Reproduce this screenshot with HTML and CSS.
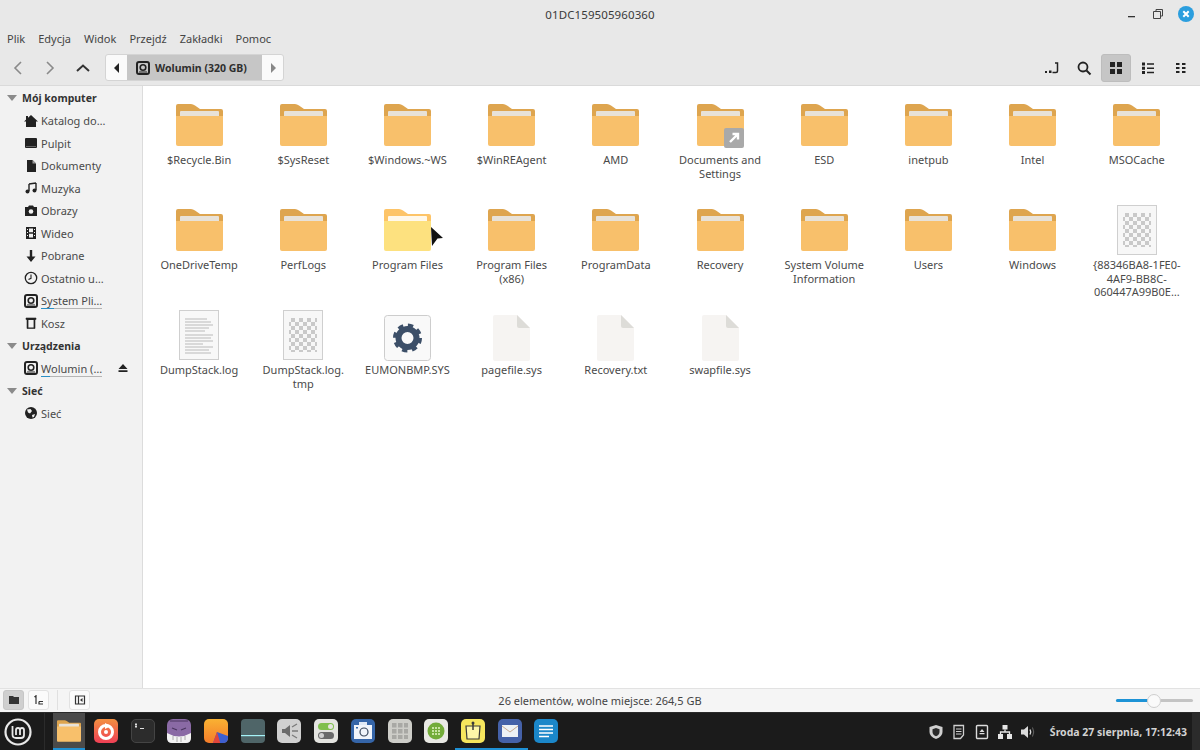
FILE: index.html
```html
<!DOCTYPE html>
<html lang="pl">
<head>
<meta charset="utf-8">
<title>01DC159505960360</title>
<link rel="stylesheet" href="styles.css">
</head>
<body>
<svg class="defs" width="0" height="0">
  <defs>
    <symbol id="folder" viewBox="0 0 47 42">
      <path d="M2 0H15q2 0 4 1.500L24 5H45q2 0 2 2V20H0V2q0-2 2-2z" fill="#dea54f"/>
      <rect x="4" y="7" width="39" height="6" rx="1" fill="#e8e2d8"/>
      <path d="M0 12H3V12H44V12H47V40q0 2-2 2H2q-2 0-2-2z" fill="#f8c06b"/>
    </symbol>
    <symbol id="folder-hover" viewBox="0 0 47 42">
      <path d="M2 0H15q2 0 4 1.500L24 5H45q2 0 2 2V20H0V2q0-2 2-2z" fill="#fdc468"/>
      <rect x="4" y="7" width="39" height="6" rx="1" fill="#fff8ea"/>
      <path d="M0 12H47V40q0 2-2 2H2q-2 0-2-2z" fill="#fde17f"/>
    </symbol>
    <pattern id="check" width="8" height="8" patternUnits="userSpaceOnUse">
      <rect width="4" height="4" fill="#c9c9c9"/>
      <rect x="4" y="4" width="4" height="4" fill="#c9c9c9"/>
    </pattern>
    <symbol id="thumb-check" viewBox="0 0 40 50">
      <rect x=".5" y=".5" width="39" height="49" fill="#f7f7f7" stroke="#cfcfcf"/>
      <rect x="6" y="8" width="28" height="34" fill="url(#check)"/>
    </symbol>
    <symbol id="thumb-text" viewBox="0 0 40 50">
      <rect x=".5" y=".5" width="39" height="49" fill="#f8f8f8" stroke="#cfcfcf"/>
      <path d="M6 9h22M6 12h26M6 15h28M6 18h24M6 21h20M6 25h28M6 28h26M6 31h28M6 34h18M6 37h28M6 40h24M6 43h26" stroke="#a9a9a9" stroke-width=".8"/>
    </symbol>
    <symbol id="file" viewBox="0 0 37 46">
      <path d="M2 0H24L37 13V44q0 2-2 2H2q-2 0-2-2V2q0-2 2-2z" fill="#f6f4f2"/>
      <path d="M24 0L37 13H26q-2 0-2-2z" fill="#dddcd8"/>
    </symbol>
    <symbol id="gear-file" viewBox="0 0 47 46">
      <rect x=".5" y=".5" width="46" height="45" rx="3" fill="#f9f9f9" stroke="#cdcdcd"/>
      <circle cx="23.500" cy="23" r="9" fill="none" stroke="#3c4f68" stroke-width="6"/>
      <circle cx="23.500" cy="23" r="12.500" fill="none" stroke="#3c4f68" stroke-width="4" stroke-dasharray="5.200 4.620"/>
    </symbol>
    <symbol id="disk" viewBox="0 0 14 14">
      <rect x="1" y="1" width="12" height="12" rx="2" fill="none" stroke="#222" stroke-width="2"/>
      <circle cx="7" cy="6.500" r="2.800" fill="none" stroke="#222" stroke-width="1.600"/>
      <rect x="3" y="10.500" width="8" height="1" fill="#222"/>
    </symbol>
  </defs>
</svg>

<div class="window">
  <header class="titlebar">
    <span class="title">01DC159505960360</span>
    <div class="wm">
      <svg class="wm-ico" viewBox="0 0 12 12"><rect x="1" y="8" width="7" height="1.300" fill="#333"/></svg>
      <svg class="wm-ico" viewBox="0 0 12 12"><path d="M4 3V1.500H10.500V8H9M1.500 3.500H8.500V10.500H1.500z" fill="none" stroke="#444" stroke-width="1"/></svg>
      <svg class="wm-close" viewBox="0 0 16 16"><circle cx="8" cy="8" r="8" fill="#2b9ede"/><path d="M5.300 5.300L10.700 10.700M10.700 5.300L5.300 10.700" stroke="#fff" stroke-width="2"/></svg>
    </div>
  </header>

  <nav class="menubar">
    <span class="menu">Plik</span><span class="menu">Edycja</span><span class="menu">Widok</span><span class="menu">Przejdź</span><span class="menu">Zakładki</span><span class="menu">Pomoc</span>
  </nav>

  <div class="toolbar">
    <div class="navs">
      <svg class="nav" viewBox="0 0 16 16"><path d="M11 2L5 8L11 14" fill="none" stroke="#8a8a8a" stroke-width="1.600"/></svg>
      <svg class="nav" viewBox="0 0 16 16"><path d="M5 2L11 8L5 14" fill="none" stroke="#8a8a8a" stroke-width="1.600"/></svg>
      <svg class="nav" viewBox="0 0 16 16"><path d="M2 11L8 5.500L14 11" fill="none" stroke="#333" stroke-width="2"/></svg>
    </div>
    <div class="path">
      <span class="path-btn"><svg class="arrow" viewBox="0 0 8 10"><path d="M6 0V10L1 5z" fill="#222"/></svg></span>
      <span class="crumb"><svg class="ico14" viewBox="0 0 14 14"><use href="#disk"/></svg>Wolumin (320 GB)</span>
      <span class="path-btn"><svg class="arrow" viewBox="0 0 8 10"><path d="M2 0V10L7 5z" fill="#888"/></svg></span>
    </div>
    <div class="views">
      <span class="view"><svg class="ico16" viewBox="0 0 16 16"><path d="M12 3H14.500V11Q14.500 12.500 13 12.500H9.500" fill="none" stroke="#222" stroke-width="1.500"/><rect x="6" y="10.500" width="2.500" height="2.500" fill="#222"/><rect x="2" y="11" width="2" height="2" fill="#222"/></svg></span>
      <span class="view"><svg class="ico16" viewBox="0 0 16 16"><circle cx="7" cy="7" r="4.500" fill="none" stroke="#222" stroke-width="1.800"/><path d="M10.500 10.500L14.500 14.500" stroke="#222" stroke-width="2"/></svg></span>
      <span class="view on"><svg class="ico16" viewBox="0 0 16 16"><path d="M2 2h5v5H2zM9 2h5v5H9zM2 9h5v5H2zM9 9h5v5H9z" fill="#222"/></svg></span>
      <span class="view"><svg class="ico16" viewBox="0 0 16 16"><path d="M2 2.500h3v3H2zM2 6.800h3v3H2zM2 11h3v3H2z" fill="#222"/><path d="M7 4h7M7 8.200h7M7 12.500h7" stroke="#222" stroke-width="1.400"/></svg></span>
      <span class="view"><svg class="ico16" viewBox="0 0 16 16"><path d="M3 3h3.500v2H3zM9 3h3.500v2H9zM3 7h3.500v2H3zM9 7h3.500v2H9zM3 11h3.500v2H3zM9 11h3.500v2H9z" fill="#222"/></svg></span>
    </div>
  </div>

  <div class="body">
    <aside class="sidebar">
      <div class="head"><i class="tri"></i>Mój komputer</div>
      <div class="row"><svg class="si" viewBox="0 0 14 14"><path d="M7 1L14 7.500H12V13H2V7.500H0zM2 2H4V4L2 6z" fill="#222"/></svg><span>Katalog do…</span></div>
      <div class="row"><svg class="si" viewBox="0 0 14 14"><rect x="1" y="2" width="12" height="10" rx="1" fill="#222"/><rect x="2" y="10" width="10" height=".8" fill="#777"/></svg><span>Pulpit</span></div>
      <div class="row"><svg class="si" viewBox="0 0 14 14"><path d="M3 1H8.500L12 4.500V13H3z" fill="#222"/><path d="M8.500 1V4.500H12" fill="#999"/></svg><span>Dokumenty</span></div>
      <div class="row"><svg class="si" viewBox="0 0 14 14"><path d="M5 3V10M12 2V9M5 3L12 2" fill="none" stroke="#222" stroke-width="1.400"/><circle cx="3.500" cy="10.500" r="2" fill="#222"/><circle cx="10.500" cy="9.500" r="2" fill="#222"/></svg><span>Muzyka</span></div>
      <div class="row"><svg class="si" viewBox="0 0 14 14"><path d="M1 3H4L5 1.500H9L10 3H13V12H1z" fill="#222"/><circle cx="7" cy="7.500" r="2.300" fill="#f2f2f2"/></svg><span>Obrazy</span></div>
      <div class="row"><svg class="si" viewBox="0 0 14 14"><path d="M2 1H12V13H2z" fill="#222"/><path d="M5 2.500H9V6.300H5zM5 7.700H9V11.500H5z" fill="#f2f2f2"/><path d="M3 3h1v1H3zM3 6h1v1H3zM3 9h1v1H3zM10 3h1v1h-1zM10 6h1v1h-1zM10 9h1v1h-1z" fill="#f2f2f2"/></svg><span>Wideo</span></div>
      <div class="row"><svg class="si" viewBox="0 0 14 14"><path d="M5.800 1H8.200V7.500H11.500L7 13L2.500 7.500H5.800z" fill="#222"/></svg><span>Pobrane</span></div>
      <div class="row"><svg class="si" viewBox="0 0 14 14"><circle cx="7" cy="7" r="5.700" fill="none" stroke="#222" stroke-width="1.300"/><path d="M7 3.500V7.300L4.500 8.500" fill="none" stroke="#222" stroke-width="1.100"/></svg><span>Ostatnio u…</span></div>
      <div class="row"><svg class="si" viewBox="0 0 14 14"><use href="#disk"/></svg><span class="used">System Pli…<i class="bar"><b class="bar-fill" style="width:22%"></b></i></span></div>
      <div class="row"><svg class="si" viewBox="0 0 14 14"><path d="M2 2H12V3.500H2zM3 3.500V12.500H11V3.500" fill="#222" stroke="#222" stroke-width=".6"/><rect x="4.400" y="4" width="5.200" height="7.500" fill="#f2f2f2"/></svg><span>Kosz</span></div>
      <div class="head"><i class="tri"></i>Urządzenia</div>
      <div class="row"><svg class="si" viewBox="0 0 14 14"><use href="#disk"/></svg><span class="used">Wolumin (…<i class="bar"><b class="bar-fill" style="width:14%"></b></i></span><svg class="eject" viewBox="0 0 10 10"><path d="M5 1L9.500 6H.5zM.5 7.200H9.500V9H.5z" fill="#222"/></svg></div>
      <div class="head"><i class="tri"></i>Sieć</div>
      <div class="row"><svg class="si" viewBox="0 0 14 14"><circle cx="7" cy="7" r="6" fill="#222"/><path d="M3 3.500L6.500 3L8 5L6 7.500L4 6.500zM8 9L11 8L10 11L8.500 11.500z" fill="#f2f2f2"/></svg><span>Sieć</span></div>
    </aside>

    <main class="files">
      <div class="item"><div class="box"><svg class="folder"><use href="#folder"/></svg></div><div class="name">$Recycle.Bin</div></div>
      <div class="item"><div class="box"><svg class="folder"><use href="#folder"/></svg></div><div class="name">$SysReset</div></div>
      <div class="item"><div class="box"><svg class="folder"><use href="#folder"/></svg></div><div class="name">$Windows.~WS</div></div>
      <div class="item"><div class="box"><svg class="folder"><use href="#folder"/></svg></div><div class="name">$WinREAgent</div></div>
      <div class="item"><div class="box"><svg class="folder"><use href="#folder"/></svg></div><div class="name">AMD</div></div>
      <div class="item"><div class="box"><div class="link-wrap"><svg class="folder"><use href="#folder"/></svg><svg class="badge" viewBox="0 0 20 20"><rect width="20" height="20" rx="2" fill="#a9a9a9"/><path d="M6 14L13 7M8.500 6H14V11.500" fill="none" stroke="#fff" stroke-width="2.400"/></svg></div></div><div class="name">Documents and Settings</div></div>
      <div class="item"><div class="box"><svg class="folder"><use href="#folder"/></svg></div><div class="name">ESD</div></div>
      <div class="item"><div class="box"><svg class="folder"><use href="#folder"/></svg></div><div class="name">inetpub</div></div>
      <div class="item"><div class="box"><svg class="folder"><use href="#folder"/></svg></div><div class="name">Intel</div></div>
      <div class="item"><div class="box"><svg class="folder"><use href="#folder"/></svg></div><div class="name">MSOCache</div></div>

      <div class="item"><div class="box"><svg class="folder"><use href="#folder"/></svg></div><div class="name">OneDriveTemp</div></div>
      <div class="item"><div class="box"><svg class="folder"><use href="#folder"/></svg></div><div class="name">PerfLogs</div></div>
      <div class="item"><div class="box"><svg class="folder"><use href="#folder-hover"/></svg></div><div class="name">Program Files</div></div>
      <div class="item"><div class="box"><svg class="folder"><use href="#folder"/></svg></div><div class="name">Program Files (x86)</div></div>
      <div class="item"><div class="box"><svg class="folder"><use href="#folder"/></svg></div><div class="name">ProgramData</div></div>
      <div class="item"><div class="box"><svg class="folder"><use href="#folder"/></svg></div><div class="name">Recovery</div></div>
      <div class="item"><div class="box"><svg class="folder"><use href="#folder"/></svg></div><div class="name">System Volume Information</div></div>
      <div class="item"><div class="box"><svg class="folder"><use href="#folder"/></svg></div><div class="name">Users</div></div>
      <div class="item"><div class="box"><svg class="folder"><use href="#folder"/></svg></div><div class="name">Windows</div></div>
      <div class="item"><div class="box"><svg class="thumb"><use href="#thumb-check"/></svg></div><div class="name">{88346BA8-1FE0-<br>4AF9-BB8C-<br>060447A99B0E…</div></div>

      <div class="item"><div class="box"><svg class="thumb"><use href="#thumb-text"/></svg></div><div class="name">DumpStack.log</div></div>
      <div class="item"><div class="box"><svg class="thumb"><use href="#thumb-check"/></svg></div><div class="name">DumpStack.log.<br>tmp</div></div>
      <div class="item"><div class="box"><svg class="folder"><use href="#gear-file"/></svg></div><div class="name">EUMONBMP.SYS</div></div>
      <div class="item"><div class="box"><svg class="file"><use href="#file"/></svg></div><div class="name">pagefile.sys</div></div>
      <div class="item"><div class="box"><svg class="file"><use href="#file"/></svg></div><div class="name">Recovery.txt</div></div>
      <div class="item"><div class="box"><svg class="file"><use href="#file"/></svg></div><div class="name">swapfile.sys</div></div>

      <svg class="cursor" viewBox="0 0 14 20"><path d="M1 0L13 11L7.500 11.500L2 19z" fill="#111"/></svg>
    </main>
  </div>

  <footer class="statusbar">
    <div class="status-left">
      <span class="sb-btn on"><svg class="ico12" viewBox="0 0 12 12"><path d="M1 2H5L6 3H11V10H1z" fill="#333"/></svg></span>
      <span class="sb-btn"><svg class="ico12" viewBox="0 0 12 12"><path d="M3 1V10M1.500 3L3 1.500M6 7.500H10M6 7.500V10H10" fill="none" stroke="#333" stroke-width="1.200"/></svg></span>
      <i class="sb-sep"></i>
      <span class="sb-btn"><svg class="ico12" viewBox="0 0 12 12"><path d="M1.500 2H10.500V10H1.500zM4.500 2V10" fill="none" stroke="#333" stroke-width="1.200"/><path d="M6 6L8.500 4V8z" fill="#333"/></svg></span>
    </div>
    <span class="status-text">26 elementów, wolne miejsce: 264,5 GB</span>
    <div class="zoom"><i class="zoom-fill"></i><i class="zoom-knob"></i></div>
  </footer>
</div>

<div class="taskbar">
  <div class="start"><svg class="mint" viewBox="0 0 30 30"><circle cx="15" cy="15" r="12.500" fill="none" stroke="#e8e8e8" stroke-width="2.200"/><path d="M9.500 9V17.500Q9.500 21 13 21H18Q21 21 21 18V13Q21 11 19 11T17 13V18M17 13Q17 11 15 11T13 13V18" fill="none" stroke="#e8e8e8" stroke-width="1.800"/></svg></div>
  <i class="task-sep"></i>
  <div class="launchers">
    <span class="task active"><svg class="folder-task"><use href="#folder"/></svg></span>
    <span class="task"><svg class="app" viewBox="0 0 24 24"><defs><linearGradient id="g1" x1="0" y1="0" x2="0" y2="1"><stop offset="0" stop-color="#f39041"/><stop offset="1" stop-color="#ef3f55"/></linearGradient></defs><rect width="24" height="24" rx="5" fill="url(#g1)"/><circle cx="12" cy="13" r="6.500" fill="none" stroke="#fff" stroke-width="3"/><path d="M11 4L17 7L11 10z" fill="#fff"/><circle cx="12" cy="13" r="2" fill="#fff"/></svg></span>
    <span class="task"><svg class="app" viewBox="0 0 24 24"><rect width="24" height="24" rx="5" fill="#2c2c2c"/><rect x=".5" y=".5" width="23" height="23" rx="4.500" fill="none" stroke="#444"/><path d="M4 5.500h2M4 7.500h2M5 4v5M9 9.500h4" stroke="#e0e0e0" stroke-width="1"/></svg></span>
    <span class="task"><svg class="app" viewBox="0 0 24 24"><rect width="24" height="24" rx="6" fill="#8a6aa5"/><path d="M0 14Q12 21 24 14V19Q24 24 19 24H5Q0 24 0 19z" fill="#f3f3f3"/><path d="M5 9l5 2M19 9l-5 2M3 2h18" stroke="#4a3560" stroke-width="1.200"/><path d="M6 17v4M10 18v5M14 18v5M18 17v4" stroke="#999" stroke-width=".8"/></svg></span>
    <span class="task"><svg class="app" viewBox="0 0 24 24"><defs><linearGradient id="g2" x1="0" y1="0" x2="0" y2="1"><stop offset="0" stop-color="#f9b233"/><stop offset="1" stop-color="#f57c2a"/></linearGradient></defs><rect width="24" height="24" rx="5" fill="url(#g2)"/><path d="M9 24L13 13L24 17V19Q24 24 19 24z" fill="#3d5fd0"/><path d="M9 24L13 13L16 23V24z" fill="#e2453a"/></svg></span>
    <span class="task"><svg class="app" viewBox="0 0 24 24"><rect width="24" height="24" rx="4" fill="#4f6568"/><rect y="16" width="24" height="1.200" fill="#a5f3f7"/></svg></span>
    <span class="task"><svg class="app" viewBox="0 0 24 24"><rect width="24" height="24" rx="5" fill="#d0d0d0"/><path d="M5 10H8L13 6V18L8 14H5z" fill="#6b6b6b"/><path d="M15 8L20 5M15 12H21M15 16L20 19" stroke="#7a7a7a" stroke-width="1.300"/></svg></span>
    <span class="task"><svg class="app" viewBox="0 0 24 24"><rect width="24" height="24" rx="5" fill="#e4e4e0"/><rect x="4" y="4" width="16" height="7" rx="3.500" fill="#7fbf4d"/><circle cx="16.500" cy="7.500" r="2.500" fill="#e4e4e0"/><rect x="4" y="13" width="16" height="7" rx="3.500" fill="#6a6a6a"/><circle cx="7.500" cy="16.500" r="2.500" fill="#cfcfcf"/></svg></span>
    <span class="task"><svg class="app" viewBox="0 0 24 24"><rect width="24" height="24" rx="5" fill="#3565a8"/><rect x="3" y="6" width="18" height="14" fill="#f0f4fa"/><rect x="8" y="3" width="8" height="3" fill="#dfe8f5"/><circle cx="13" cy="13" r="4" fill="none" stroke="#39475c" stroke-width="1.200"/><rect x="5" y="8" width="2" height="1.500" fill="#3565a8"/></svg></span>
    <span class="task"><svg class="app" viewBox="0 0 24 24"><rect width="24" height="24" rx="5" fill="#cdcdc8"/><path d="M4 4h4.500v4.500H4zM10 4h4.500v4.500H10zM16 4h4v4.500h-4zM4 10h4.500v4.500H4zM10 10h4.500v4.500H10zM16 10h4v4.500h-4zM4 16h4.500v4H4zM10 16h4.500v4H10zM16 16h4v4h-4z" fill="#a8a8a4"/></svg></span>
    <span class="task"><svg class="app" viewBox="0 0 24 24"><rect width="24" height="24" rx="5" fill="#e9e9e4"/><circle cx="12" cy="12" r="8.500" fill="#73ac39"/><path d="M8 8h2v2H8zM11 8h2v2h-2zM14 8h2v2h-2zM8 11h2v2H8zM11 11h2v2h-2zM14 11h2v2h-2zM8 14h2v2H8zM11 14h2v2h-2zM14 14h2v2h-2z" fill="#c8e3a2"/></svg></span>
    <span class="task open"><svg class="app" viewBox="0 0 24 24"><rect width="24" height="24" rx="5" fill="#f6e65d"/><path d="M5 7H19L18 20H6z" fill="#fdf6a8" stroke="#3a3a3a" stroke-width="1.200"/><path d="M12 3V11" stroke="#3a3a3a" stroke-width="1.500"/><circle cx="12" cy="4" r="1.500" fill="#3a3a3a"/></svg></span>
    <span class="task open"><svg class="app" viewBox="0 0 24 24"><rect width="24" height="24" rx="5" fill="#4561a8"/><rect x="4" y="6" width="16" height="12" fill="#eef1f5"/><path d="M4 7L12 13L20 7" fill="none" stroke="#c9a98f" stroke-width="1"/></svg></span>
    <span class="task"><svg class="app" viewBox="0 0 24 24"><rect width="24" height="24" rx="5" fill="#1b87c9"/><path d="M5 7H19M5 10.500H19M5 14H19M5 17.500H15" stroke="#fff" stroke-width="1.600"/></svg></span>
  </div>
  <div class="tray">
    <svg class="tray-ico" viewBox="0 0 16 16"><path d="M8 1L14.500 3V8Q14.500 12.500 8 15Q1.500 12.500 1.500 8V3z" fill="#cfcfcf"/><path d="M8 4L11.500 5.200V8Q11.500 10.800 8 12.300Q4.500 10.800 4.500 8V5.200z" fill="#2a2a2a"/></svg>
    <svg class="tray-ico" viewBox="0 0 16 16"><path d="M3 1.500H12.500V11L9.500 14.500H3z" fill="none" stroke="#cfcfcf" stroke-width="1.300"/><path d="M5 5H10.500M5 7.500H10.500M5 10H10.500" stroke="#cfcfcf" stroke-width="1.100"/></svg>
    <svg class="tray-ico" viewBox="0 0 16 16"><rect x="2.500" y="1.500" width="11" height="13" rx="1" fill="none" stroke="#dcdcdc" stroke-width="1.400"/><path d="M8 5L10.500 8H5.500zM5.500 9H10.500V10.200H5.500z" fill="#dcdcdc"/></svg>
    <svg class="tray-ico" viewBox="0 0 16 16"><path d="M5.500 1H10.500V5.500H5.500zM1 10H6V15H1zM10 10H15V15H10z" fill="#e6e6e6"/><path d="M8 5.500V8M3.500 10V8H12.500V10" fill="none" stroke="#e6e6e6" stroke-width="1.300"/></svg>
    <svg class="tray-ico" viewBox="0 0 16 16"><path d="M1 5.500H4L8 2V14L4 10.500H1z" fill="#dcdcdc"/><path d="M10 5.500Q11.500 8 10 10.500" fill="none" stroke="#dcdcdc" stroke-width="1.400"/><path d="M12.500 3.500Q15 8 12.500 12.500" fill="none" stroke="#666" stroke-width="1"/></svg>
    <span class="clock">Środa 27 sierpnia, 17:12:43</span>
  </div>
  <i class="show-desktop"></i>
</div>
</body>
</html>
```

FILE: styles.css
```css
* { box-sizing: border-box; }
html, body { margin: 0; padding: 0; }
body {
  width: 1200px;
  height: 750px;
  overflow: hidden;
  display: flex;
  flex-direction: column;
  font-family: "Noto Sans", "Open Sans", sans-serif;
  font-size: 11px;
  color: #3f3f3f;
  background: #e8e8e8;
}
.defs { position: absolute; }
svg { display: block; flex: none; }

.window { height: 712px; display: flex; flex-direction: column; }

.titlebar {
  height: 26px;
  flex: none;
  position: relative;
  display: flex;
  align-items: center;
  justify-content: center;
  background: #e8e8e8;
}
.title { font-size: 11.5px; letter-spacing: .1px; color: #3a3a3a; padding-top: 2px; }
.wm {
  position: absolute;
  right: 6px;
  top: 6px;
  display: flex;
  align-items: center;
  gap: 10px;
}
.wm-ico { width: 12px; height: 12px; margin-right: 3px; }
.wm-close { width: 16px; height: 16px; margin-left: 1px; }

.menubar {
  height: 24px;
  flex: none;
  display: flex;
  align-items: center;
  padding-left: 7px;
  gap: 13px;
  background: #e8e8e8;
}
.menu { color: #444; }

.toolbar {
  height: 36px;
  flex: none;
  display: flex;
  align-items: center;
  background: #e8e8e8;
  border-bottom: 1px solid #dadada;
}
.navs { display: flex; width: 105px; padding-left: 10px; gap: 16px; }
.nav { width: 16px; height: 16px; }
.nav:nth-child(3) { margin-left: 1px; }
.path {
  display: flex;
  height: 27px;
  width: 179px;
  border: 1px solid #d4d4d4;
  border-radius: 3px;
  overflow: hidden;
  background: #fafafa;
}
.path-btn { width: 21px; display: flex; align-items: center; justify-content: center; flex: none; }
.arrow { width: 8px; height: 10px; }
.crumb {
  flex: 1;
  display: flex;
  align-items: center;
  gap: 5px;
  padding-left: 9px;
  background: #c6c6c6;
  font-weight: 700;
  font-size: 10.5px;
  color: #2e2e2e;
}
.ico14 { width: 14px; height: 14px; }
.views { margin-left: auto; display: flex; padding-right: 3px; }
.view {
  width: 32.500px;
  height: 28px;
  display: flex;
  align-items: center;
  justify-content: center;
  border-radius: 3px;
}
.view.on { background: #c6c6c6; border: 1px solid #bdbdbd; width: 30px; margin: 0 1px; }
.ico16 { width: 16px; height: 16px; }

.body { flex: 1; display: flex; min-height: 0; }
.sidebar {
  width: 143px;
  flex: none;
  background: #f2f2f2;
  border-right: 1px solid #dcdcdc;
  padding-top: 1px;
}
.head, .row { height: 22.500px; display: flex; align-items: center; }
.head { font-weight: 700; padding-left: 7px; font-size: 10.5px; color: #333; }
.tri {
  width: 0;
  height: 0;
  border-left: 5px solid transparent;
  border-right: 5px solid transparent;
  border-top: 6px solid #8b8b8b;
  margin-right: 5px;
}
.row { padding-left: 24px; color: #4a4a4a; }
.si { width: 14px; height: 14px; margin-right: 3px; }
.used { position: relative; }
.bar {
  position: absolute;
  left: 0;
  right: 0;
  bottom: -1px;
  height: 1px;
  background: #b5b5b5;
}
.bar-fill { display: block; height: 1px; background: #2a8fc4; }
.eject { width: 10px; height: 10px; margin-left: 16px; }

.files {
  flex: 1;
  position: relative;
  background: #fff;
  padding: 12px 0 0 4px;
  display: grid;
  grid-template-columns: repeat(10, 104.200px);
  grid-auto-rows: 105px;
  align-content: start;
}
.item { display: flex; flex-direction: column; align-items: center; }
.box { height: 52px; display: flex; align-items: center; justify-content: center; }
.folder { width: 47px; height: 42px; }
.item:nth-child(n+21) .folder { height: 46px; }
.folder { margin-top: 2px; }
.thumb { width: 40px; height: 50px; margin-top: 2px; }
.file { width: 37px; height: 46px; margin-top: 8px; }
.item:nth-child(n+21) .folder { margin-top: 8px; }
.link-wrap { position: relative; }
.badge { position: absolute; left: 27px; top: 26px; width: 20px; height: 20px; }
.name {
  width: 96px;
  margin-top: 3px;
  line-height: 13.500px;
  text-align: center;
  color: #4a4a4a;
}
.cursor { position: absolute; left: 287px; top: 141px; width: 14px; height: 20px; }

.statusbar {
  height: 24px;
  flex: none;
  position: relative;
  display: flex;
  align-items: center;
  justify-content: center;
  background: #f5f5f5;
  border-top: 1px solid #e2e2e2;
}
.status-left {
  position: absolute;
  left: 3px;
  top: 1px;
  display: flex;
  align-items: center;
  gap: 4px;
}
.sb-btn {
  width: 21px;
  height: 20px;
  display: flex;
  align-items: center;
  justify-content: center;
  border: 1px solid #e2e2e2;
  border-radius: 3px;
  background: #fbfbfb;
}
.sb-btn.on { background: #cfcfcf; border-color: #c6c6c6; }
.sb-sep { width: 1px; height: 20px; background: #e0e0e0; margin: 0 7px 0 4px; }
.ico12 { width: 12px; height: 12px; }
.status-text { color: #444; font-size: 11px; }
.zoom {
  position: absolute;
  left: 1116px;
  top: 10px;
  width: 77px;
  height: 3px;
  border-radius: 2px;
  background: #c4c4c4;
}
.zoom-fill { display: block; width: 38px; height: 3px; border-radius: 2px; background: #1d93d6; }
.zoom-knob {
  position: absolute;
  left: 31px;
  top: -5px;
  width: 14px;
  height: 14px;
  border-radius: 50%;
  background: #fafafa;
  border: 1px solid #cfcfcf;
}

.taskbar {
  height: 38px;
  flex: none;
  display: flex;
  align-items: stretch;
  background: #1b1b1b;
  border-top: 1px solid #2a2a2a;
  color: #d8d8d8;
}
.start { width: 44px; display: flex; align-items: center; justify-content: center; padding-right: 8px; }
.mint { width: 30px; height: 30px; }
.task-sep { width: 1px; background: #2b2b2b; margin-right: 6px; }
.launchers { display: flex; }
.task {
  width: 36.700px;
  display: flex;
  align-items: center;
  justify-content: center;
  padding-bottom: 1px;
}
.task.active { background: #4a4a4a; border-bottom: 2px solid #1e90d4; width: 32px; margin: 0 2.350px; padding-bottom: 0; }
.task.open { box-shadow: inset 0 -2px 0 #1e90d4; }
.app { width: 24px; height: 24px; }
.folder-task { width: 24px; height: 22px; }
.tray {
  margin-left: auto;
  display: flex;
  align-items: center;
  gap: 7px;
  padding-right: 5px;
}
.tray-ico { width: 16px; height: 16px; }
.clock { margin-left: 7px; font-weight: 700; font-size: 10.500px; color: #d2d2d2; }
.show-desktop { width: 8px; background: #2b2b2b; }
```
